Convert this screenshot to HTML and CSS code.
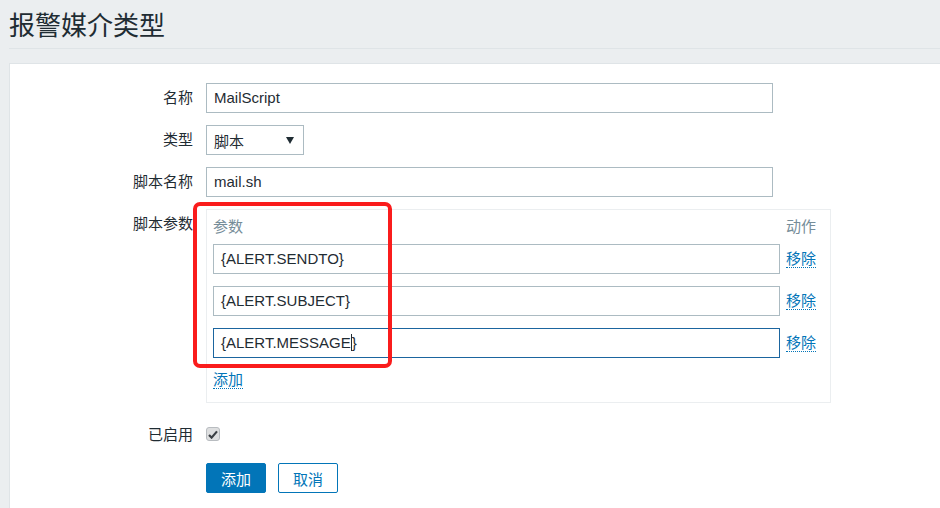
FILE: index.html
```html
<!DOCTYPE html>
<html lang="zh-CN">
<head>
<meta charset="utf-8">
<title>报警媒介类型</title>
<link rel="stylesheet" href="styles.css">
</head>
<body>
<header class="page-header">
  <h1 class="page-title">报警媒介类型</h1>
</header>
<main class="panel">
  <div class="form">
    <div class="form-row">
      <div class="label">名称</div>
      <div class="control"><div class="field field-wide">MailScript</div></div>
    </div>
    <div class="form-row">
      <div class="label">类型</div>
      <div class="control">
        <div class="select">
          <span>脚本</span>
          <svg class="select-arrow" width="8" height="7" viewBox="0 0 8 7"><path d="M0 0H8L4 7Z" fill="#1f2c33"/></svg>
        </div>
      </div>
    </div>
    <div class="form-row">
      <div class="label">脚本名称</div>
      <div class="control"><div class="field field-wide">mail.sh</div></div>
    </div>
    <div class="form-row">
      <div class="label">脚本参数</div>
      <div class="control">
        <div class="params">
          <div class="params-grid">
            <div class="th">参数</div>
            <div class="th">动作</div>
            <div class="field param-field">{ALERT.SENDTO}</div>
            <div class="cell-action"><a class="link">移除</a></div>
            <div class="field param-field">{ALERT.SUBJECT}</div>
            <div class="cell-action"><a class="link">移除</a></div>
            <div class="field param-field focused">{ALERT.MESSAGE<span class="caret"></span>}</div>
            <div class="cell-action"><a class="link">移除</a></div>
            <div class="add-cell"><a class="link">添加</a></div>
          </div>
        </div>
        <div class="annotation"></div>
      </div>
    </div>
    <div class="form-row row-check">
      <div class="label">已启用</div>
      <div class="control">
        <span class="checkbox">
          <svg width="10" height="9" viewBox="0 0 10 9"><path d="M1 5L3.6 7.6L9 1.4" fill="none" stroke="#3a3f44" stroke-width="2.2"/></svg>
        </span>
      </div>
    </div>
    <div class="form-row row-buttons">
      <div class="label"></div>
      <div class="control buttons">
        <button class="btn btn-primary">添加</button>
        <button class="btn btn-alt">取消</button>
      </div>
    </div>
  </div>
</main>
</body>
</html>
```
FILE: styles.css
```css
html, body {
  margin: 0;
  padding: 0;
  background: #ebeef0;
  font-family: "Liberation Sans", Arial, "Noto Sans CJK SC", sans-serif;
  color: #1f2c33;
  font-size: 15px;
  overflow: hidden;
}

.page-header {
  margin-left: 9px;
  height: 49px;
  border-bottom: 1px solid #dfe4e7;
  box-sizing: border-box;
  display: flex;
  align-items: center;
}

.page-title {
  margin: 0;
  font-size: 26px;
  font-weight: normal;
  line-height: 30px;
  padding-top: 3px;
  color: #1f2c33;
}

.panel {
  margin: 14px 0 0 9px;
  background: #fff;
  border: 1px solid #dfe4e7;
  border-right: none;
  height: 460px;
  box-sizing: border-box;
  padding-top: 19px;
}

.form {
  display: flex;
  flex-direction: column;
  gap: 12px;
}

.form-row {
  display: grid;
  grid-template-columns: 183px auto;
  column-gap: 13px;
  align-items: start;
}

.label {
  text-align: right;
  line-height: 30px;
  height: 30px;
  white-space: nowrap;
}

.control {
  position: relative;
}

.field {
  box-sizing: border-box;
  height: 30px;
  line-height: 28px;
  border: 1px solid #acbbc2;
  background: #fff;
  padding: 0 7px;
  white-space: nowrap;
}

.field-wide {
  width: 567px;
}

.select {
  box-sizing: border-box;
  width: 98px;
  height: 30px;
  border: 1px solid #acbbc2;
  padding: 0 8px 0 7px;
  display: flex;
  align-items: center;
  justify-content: space-between;
}

.select-arrow {
  margin-right: 1px;
}

.params {
  box-sizing: border-box;
  width: 625px;
  border: 1px solid #ebeef0;
  padding: 6px 13px 12px 6px;
}

.params-grid {
  display: grid;
  grid-template-columns: 567px auto;
  column-gap: 6px;
  row-gap: 12px;
}

.th {
  color: #768d99;
  line-height: 22px;
  height: 22px;
  margin-bottom: -6px;
}

.param-field {
  height: 29.5px;
  line-height: 27.5px;
  padding-left: 7px;
}

.param-field.focused {
  border-color: #1b659f;
}

.caret {
  display: inline-block;
  width: 1px;
  height: 17px;
  background: #1f2c33;
  vertical-align: -3px;
}

.cell-action {
  line-height: 30px;
}

.add-cell {
  grid-column: 1 / 3;
  line-height: 20px;
  margin-top: 0;
}

.link {
  color: #0275b8;
  text-decoration: none;
  border-bottom: 1px dotted #0275b8;
  cursor: pointer;
}

.annotation {
  position: absolute;
  left: -13px;
  top: -7px;
  width: 199px;
  height: 166px;
  border: 4px solid #fa1c1c;
  border-radius: 7px;
  box-sizing: border-box;
}

.row-check {
  margin-top: 5px;
}

.row-check .control {
  height: 30px;
  display: flex;
  align-items: center;
}

.checkbox {
  box-sizing: border-box;
  width: 14px;
  height: 14px;
  border: 1px solid #b8bcc0;
  border-radius: 3px;
  background: #dedfe0;
  display: flex;
  align-items: center;
  justify-content: center;
  margin-top: -2px;
}

.row-buttons {
  margin-top: 1px;
}

.buttons {
  display: flex;
  gap: 12px;
}

.btn {
  box-sizing: border-box;
  width: 60px;
  height: 30px;
  border-radius: 2px;
  font-family: inherit;
  font-size: 15px;
  padding: 0;
  cursor: pointer;
}

.btn-primary {
  background: #0275b8;
  border: 1px solid #0275b8;
  color: #fff;
}

.btn-alt {
  background: #fff;
  border: 1px solid #0275b8;
  color: #0275b8;
}
```
